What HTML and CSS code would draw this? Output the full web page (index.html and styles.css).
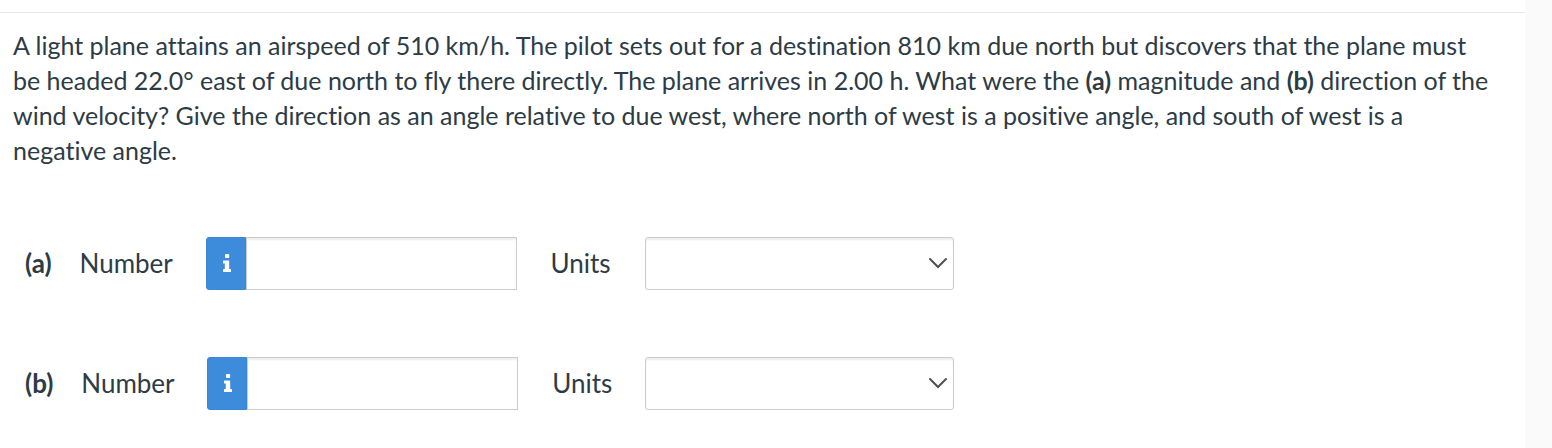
FILE: index.html
```html
<!DOCTYPE html>
<html lang="en">
<head>
  <meta charset="UTF-8">
  <meta name="viewport" content="width=device-width, initial-scale=1.0">
  <title>Wind velocity</title>
  <link rel="stylesheet" href="styles.css">
</head>
<body>
  <main class="question">
    <p class="prompt">A light plane attains an airspeed of 510 km/h. The pilot sets out for a destination 810 km due north but discovers that the plane must be headed 22.0° east of due north to fly there directly. The plane arrives in 2.00 h. What were the <b>(a)</b> magnitude and <b>(b)</b> direction of the wind velocity? Give the direction as an angle relative to due west, where north of west is a positive angle, and south of west is a negative angle.</p>

    <form class="answers">
      <div class="answer">
        <div class="value">
          <b class="part">(a)</b>
          <label class="number-label" for="number-a">Number</label>
          <div class="number-field">
            <button class="info" type="button" aria-label="Number format help">
              <svg class="info-icon" viewBox="0 0 8 18" aria-hidden="true"><path d="M2.8 0h2.6q.8 0 .8.8v2.4q0 .8-.8.8H2.8Q2 4 2 3.200V.8Q2 0 2.800 0zM.6 6.500h5q.6 0 .6.600V15h1.200q.6 0 .6.600v1.800q0 .6-.6.600H.6q-.6 0-.6-.6v-1.800Q0 15 .6 15h1.200V9.500H.6Q0 9.500 0 8.900V7.100q0-.6.600-.6z"/></svg>
            </button>
            <input class="number" type="text" id="number-a">
          </div>
          <label class="units-label" for="units-a">Units</label>
        </div>
        <div class="units-field">
          <select class="units" id="units-a"><option></option></select>
          <svg class="chevron" viewBox="0 0 18 12" aria-hidden="true"><path d="M1 2l8 8 8-8"/></svg>
        </div>
      </div>

      <div class="answer">
        <div class="value">
          <b class="part">(b)</b>
          <label class="number-label" for="number-b">Number</label>
          <div class="number-field">
            <button class="info" type="button" aria-label="Number format help">
              <svg class="info-icon" viewBox="0 0 8 18" aria-hidden="true"><path d="M2.8 0h2.6q.8 0 .8.8v2.4q0 .8-.8.8H2.8Q2 4 2 3.200V.8Q2 0 2.800 0zM.6 6.500h5q.6 0 .6.600V15h1.200q.6 0 .6.600v1.800q0 .6-.6.600H.6q-.6 0-.6-.6v-1.800Q0 15 .6 15h1.200V9.500H.6Q0 9.500 0 8.900V7.100q0-.6.600-.6z"/></svg>
            </button>
            <input class="number" type="text" id="number-b">
          </div>
          <label class="units-label" for="units-b">Units</label>
        </div>
        <div class="units-field">
          <select class="units" id="units-b"><option></option></select>
          <svg class="chevron" viewBox="0 0 18 12" aria-hidden="true"><path d="M1 2l8 8 8-8"/></svg>
        </div>
      </div>
    </form>
  </main>
</body>
</html>
```
FILE: styles.css
```css
* {
  box-sizing: border-box;
}

body {
  margin: 0;
  padding-right: 27px;
  background: #fafafa;
  color: #2d3b45;
  font-family: Lato, sans-serif;
  font-size: 26px;
  font-variant-ligatures: none;
  line-height: 35px;
}

.question {
  min-height: 100vh;
  padding: 12px 0 38px;
  background: linear-gradient(#e8e8e8, #e8e8e8) 0 12px / 100% 1px no-repeat #fff;
}

.prompt {
  margin: 0;
  padding: 16px 29px 0 13px;
  font-size: 25px;
}

.answers {
  display: flex;
  flex-direction: column;
  gap: 67px;
  margin-top: 69px;
  padding-left: 25px;
}

.answer {
  display: grid;
  grid-template-columns: 620px 309px;
  align-items: center;
}

.value {
  display: flex;
  align-items: center;
}

.part {
  margin-right: 28px;
}

.number-label {
  width: 126px;
}

.number-field {
  display: flex;
  width: 311px;
  height: 53px;
  margin-right: 34px;
}

.info {
  display: flex;
  align-items: center;
  justify-content: center;
  width: 40px;
  padding: 0 0 2px 2px;
  border: 1px solid #3a87d6;
  border-radius: 3px 0 0 3px;
  background: #3d8bdb;
}

.info-icon {
  width: 8px;
  height: 18px;
  fill: #fff;
}

.number {
  flex: 1;
  min-width: 0;
  padding: 0 12px;
  border: 1px solid #ccc;
  border-radius: 0;
  background: #fff;
  box-shadow: inset 0 2px 2px rgba(0, 0, 0, 0.07);
  color: inherit;
  font: inherit;
}

.units-field {
  position: relative;
  height: 53px;
}

.units {
  width: 100%;
  height: 100%;
  padding: 0 40px 0 12px;
  border: 1px solid #ccc;
  border-radius: 3px;
  background: #fff;
  box-shadow: inset 0 2px 2px rgba(0, 0, 0, 0.07);
  color: inherit;
  font: inherit;
  appearance: none;
}

.chevron {
  position: absolute;
  top: 20px;
  right: 7px;
  width: 18px;
  height: 12px;
  fill: none;
  stroke: #505050;
  stroke-width: 2;
  stroke-linecap: round;
  pointer-events: none;
}
```
